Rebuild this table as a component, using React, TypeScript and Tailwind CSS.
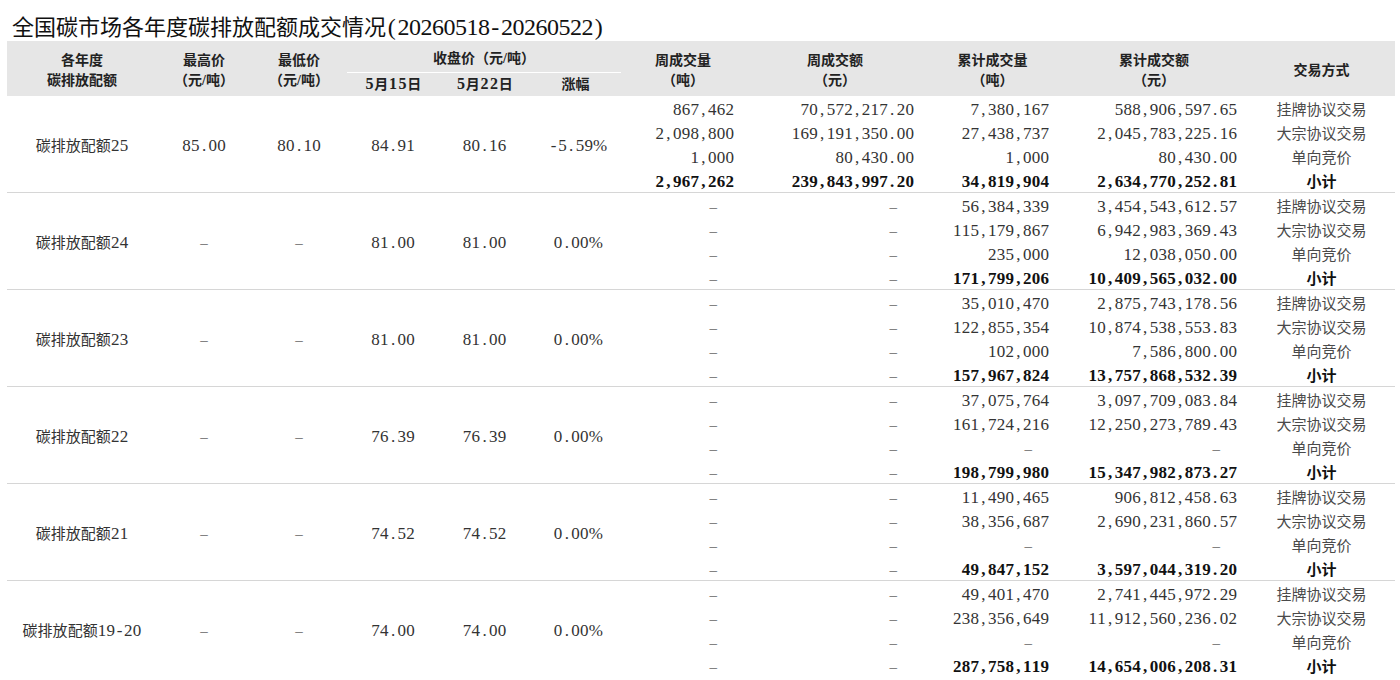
import React from "react";

type Group = {
  name: string;
  high: string;
  low: string;
  p1: string;
  p2: string;
  chg: string;
  rows: string[][];
};

const groups: Group[] = [
  {
    name: "碳排放配额25",
    high: "85.00",
    low: "80.10",
    p1: "84.91",
    p2: "80.16",
    chg: "-5.59%",
    rows: [
      ["867,462", "70,572,217.20", "7,380,167", "588,906,597.65"],
      ["2,098,800", "169,191,350.00", "27,438,737", "2,045,783,225.16"],
      ["1,000", "80,430.00", "1,000", "80,430.00"],
      ["2,967,262", "239,843,997.20", "34,819,904", "2,634,770,252.81"],
    ],
  },
  {
    name: "碳排放配额24",
    high: "-",
    low: "-",
    p1: "81.00",
    p2: "81.00",
    chg: "0.00%",
    rows: [
      ["-", "-", "56,384,339", "3,454,543,612.57"],
      ["-", "-", "115,179,867", "6,942,983,369.43"],
      ["-", "-", "235,000", "12,038,050.00"],
      ["-", "-", "171,799,206", "10,409,565,032.00"],
    ],
  },
  {
    name: "碳排放配额23",
    high: "-",
    low: "-",
    p1: "81.00",
    p2: "81.00",
    chg: "0.00%",
    rows: [
      ["-", "-", "35,010,470", "2,875,743,178.56"],
      ["-", "-", "122,855,354", "10,874,538,553.83"],
      ["-", "-", "102,000", "7,586,800.00"],
      ["-", "-", "157,967,824", "13,757,868,532.39"],
    ],
  },
  {
    name: "碳排放配额22",
    high: "-",
    low: "-",
    p1: "76.39",
    p2: "76.39",
    chg: "0.00%",
    rows: [
      ["-", "-", "37,075,764", "3,097,709,083.84"],
      ["-", "-", "161,724,216", "12,250,273,789.43"],
      ["-", "-", "-", "-"],
      ["-", "-", "198,799,980", "15,347,982,873.27"],
    ],
  },
  {
    name: "碳排放配额21",
    high: "-",
    low: "-",
    p1: "74.52",
    p2: "74.52",
    chg: "0.00%",
    rows: [
      ["-", "-", "11,490,465", "906,812,458.63"],
      ["-", "-", "38,356,687", "2,690,231,860.57"],
      ["-", "-", "-", "-"],
      ["-", "-", "49,847,152", "3,597,044,319.20"],
    ],
  },
  {
    name: "碳排放配额19-20",
    high: "-",
    low: "-",
    p1: "74.00",
    p2: "74.00",
    chg: "0.00%",
    rows: [
      ["-", "-", "49,401,470", "2,741,445,972.29"],
      ["-", "-", "238,356,649", "11,912,560,236.02"],
      ["-", "-", "-", "-"],
      ["-", "-", "287,758,119", "14,654,006,208.31"],
    ],
  },
];

const types = ["挂牌协议交易", "大宗协议交易", "单向竞价", "小计"];

const FONT = {
  fontFamily: '"Liberation Serif", "Noto Sans CJK SC", serif',
};

/* Half-width characters get a fixed cell, like a Song-style font's monospaced digits */
function Mono({ s }: { s: string }) {
  return (
    <>
      {Array.from(s).map((c, i) =>
        c.charCodeAt(0) < 256 ? (
          <span key={i} className="inline-block w-[8.75px] text-center text-[17px]">
            {c}
          </span>
        ) : (
          <React.Fragment key={i}>{c}</React.Fragment>
        )
      )}
    </>
  );
}

function HeadMono({ s }: { s: string }) {
  return (
    <>
      {Array.from(s).map((c, i) =>
        c.charCodeAt(0) < 256 ? (
          <span key={i} className="inline-block w-[9.5px] text-center text-[16px]">
            {c}
          </span>
        ) : (
          <React.Fragment key={i}>{c}</React.Fragment>
        )
      )}
    </>
  );
}

function TitleMono({ s }: { s: string }) {
  return (
    <>
      {Array.from(s).map((c, i) => (
        <span key={i} className="inline-block w-[11.5px] text-center text-[24px]">
          {c}
        </span>
      ))}
    </>
  );
}

function Dash() {
  return <span className="text-[#666]">–</span>;
}

function NumCell({ v, bold, border }: { v: string; bold: boolean; border: boolean }) {
  const isDash = v === "-";
  return (
    <td
      className={`h-[24px] p-0 pt-[4px] pr-[11px] text-right leading-[20px] whitespace-nowrap ${
        bold && !isDash ? "font-bold text-[#111]" : "text-[#333]"
      } ${border ? "border-b border-[#d6d6d6]" : ""}`}
    >
      {isDash ? (
        <span className="mr-[17px] text-[#666]">–</span>
      ) : (
        <Mono s={v} />
      )}
    </td>
  );
}

function PriceCell({ v, bcls }: { v: string; bcls: string }) {
  return (
    <td rowSpan={4} className={`p-0 pt-[4px] text-center text-[#333] whitespace-nowrap ${bcls}`}>
      {v === "-" ? <Dash /> : <Mono s={v} />}
    </td>
  );
}

export default function App() {
  return (
    <div className="w-[1400px] h-[680px] overflow-hidden bg-white" style={FONT}>
      <div className="h-[41px] pl-[12px] pt-[14px] text-[22px] leading-[26px] text-[#111] whitespace-nowrap">
        全国碳市场各年度碳排放配额成交情况
        <TitleMono s="(20260518-20260522)" />
      </div>
      <table className="ml-[7px] w-[1388px] table-fixed border-collapse text-[15px]">
        <colgroup>
          <col className="w-[150px]" />
          <col className="w-[94px]" />
          <col className="w-[96px]" />
          <col className="w-[92px]" />
          <col className="w-[91px]" />
          <col className="w-[91px]" />
          <col className="w-[124px]" />
          <col className="w-[180px]" />
          <col className="w-[135px]" />
          <col className="w-[188px]" />
          <col className="w-[147px]" />
        </colgroup>
        <thead className="bg-[#e6e6e6] text-[14px] font-bold text-[#222]">
          <tr className="h-[31px]">
            <th rowSpan={2} className="p-0 pt-[4px] font-bold leading-[20px]">
              各年度
              <br />
              碳排放配额
            </th>
            <th rowSpan={2} className="p-0 pt-[4px] font-bold leading-[20px]">
              最高价
              <br />
              （元/吨）
            </th>
            <th rowSpan={2} className="p-0 pt-[4px] font-bold leading-[20px]">
              最低价
              <br />
              （元/吨）
            </th>
            <th colSpan={3} className="border-b border-white p-0 pt-[6px] font-bold leading-[20px]">
              收盘价（元/吨）
            </th>
            <th rowSpan={2} className="p-0 pt-[4px] font-bold leading-[20px]">
              周成交量
              <br />
              （吨）
            </th>
            <th rowSpan={2} className="p-0 pt-[4px] font-bold leading-[20px]">
              周成交额
              <br />
              （元）
            </th>
            <th rowSpan={2} className="p-0 pt-[4px] font-bold leading-[20px]">
              累计成交量
              <br />
              （吨）
            </th>
            <th rowSpan={2} className="p-0 pt-[4px] font-bold leading-[20px]">
              累计成交额
              <br />
              （元）
            </th>
            <th rowSpan={2} className="p-0 pt-[4px] font-bold leading-[20px]">
              交易方式
            </th>
          </tr>
          <tr className="h-[24px]">
            <th className="p-0 pt-[1px] font-bold leading-[20px] whitespace-nowrap">
              <HeadMono s="5月15日" />
            </th>
            <th className="p-0 pt-[1px] font-bold leading-[20px] whitespace-nowrap">
              <HeadMono s="5月22日" />
            </th>
            <th className="p-0 pt-[1px] font-bold leading-[20px]">涨幅</th>
          </tr>
        </thead>
        <tbody>
          {groups.map((g, gi) => {
            const last = gi === groups.length - 1;
            return g.rows.map((r, ri) => {
              const isSub = ri === 3;
              const border = isSub && !last;
              const bcls = !last ? "border-b border-[#d6d6d6]" : "";
              return (
                <tr key={`${gi}-${ri}`}>
                  {ri === 0 && (
                    <>
                      <td rowSpan={4} className={`p-0 pt-[4px] text-center text-[#333] whitespace-nowrap ${bcls}`}>
                        <Mono s={g.name} />
                      </td>
                      <PriceCell v={g.high} bcls={bcls} />
                      <PriceCell v={g.low} bcls={bcls} />
                      <PriceCell v={g.p1} bcls={bcls} />
                      <PriceCell v={g.p2} bcls={bcls} />
                      <PriceCell v={g.chg} bcls={bcls} />
                    </>
                  )}
                  {r.map((v, ci) => (
                    <NumCell key={ci} v={v} bold={isSub} border={border} />
                  ))}
                  <td
                    className={`h-[24px] p-0 pt-[4px] text-center leading-[20px] ${
                      isSub ? "font-bold text-[#111]" : "text-[#4a4a4a]"
                    } ${border ? "border-b border-[#d6d6d6]" : ""}`}
                  >
                    {types[ri]}
                  </td>
                </tr>
              );
            });
          })}
        </tbody>
      </table>
    </div>
  );
}
